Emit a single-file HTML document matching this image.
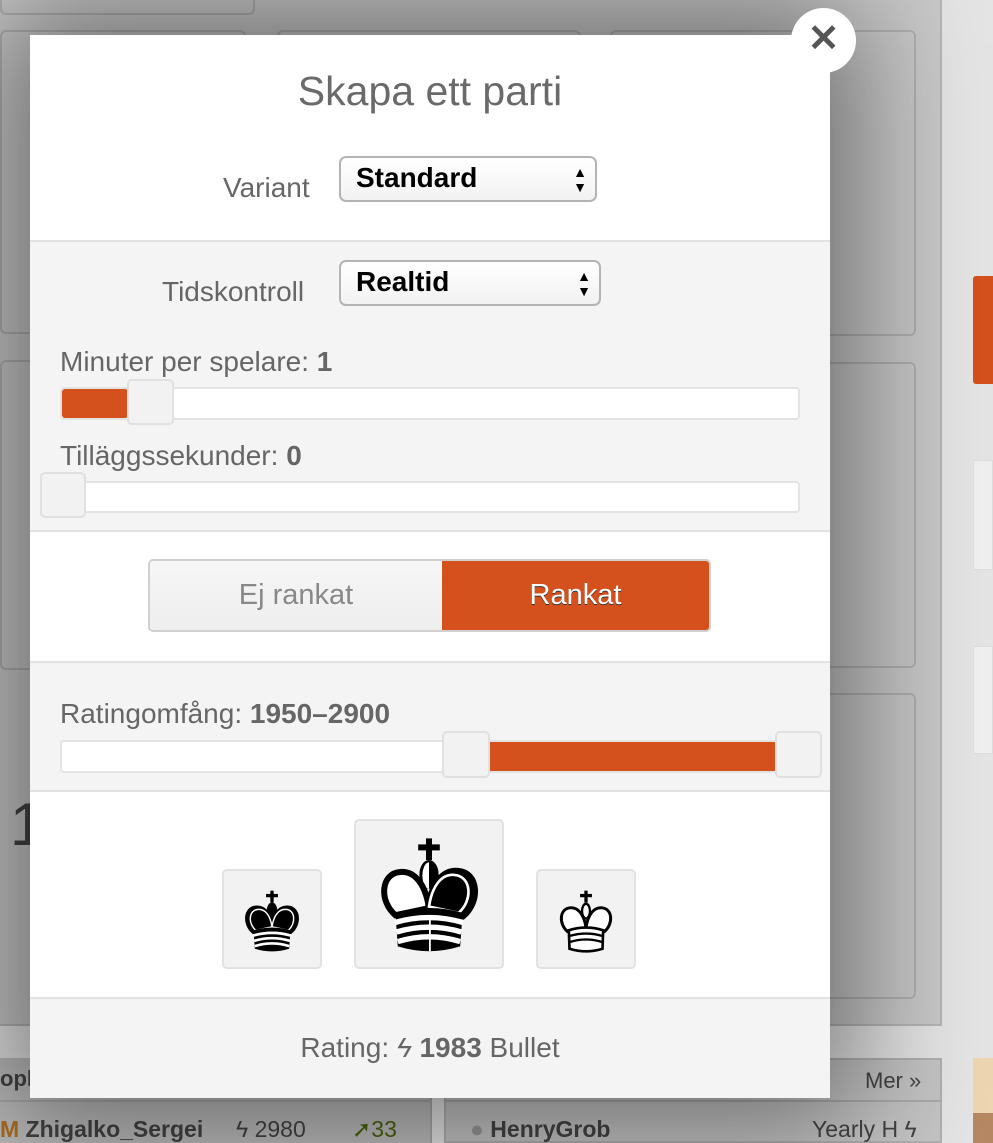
<!DOCTYPE html>
<html><head><meta charset="utf-8"><style>
*{box-sizing:border-box;margin:0;padding:0}
body{width:993px;height:1143px;overflow:hidden;background:#e4e4e4;font-family:"Liberation Sans",sans-serif;position:relative}
.abs{position:absolute}
.page{left:0;top:0;width:942px;height:1026px;background:#c9c9c9;border-right:2px solid #b5b5b5;border-bottom:2px solid #b5b5b5}
.panel{border:2px solid rgba(0,0,0,.12);border-radius:6px}
.modal{left:30px;top:35px;width:800px;height:1063px;background:#f4f4f4;box-shadow:0 0 110px 30px rgba(0,0,0,.45);color:#666}
.sec{position:absolute;left:0;width:800px}
.white{background:#fff}
.bt{border-top:2px solid #e2e2e2}
.sel{position:absolute;height:46px;border:2px solid #b4b4b4;border-radius:7px;background:linear-gradient(#fff,#f2f2f2);font-weight:bold;color:#000;font-size:28px;padding:4px 0 0 15px;white-space:nowrap}
.arr{position:absolute;right:8px;top:7px;font-size:14px;line-height:15px;color:#000}
.lbl{position:absolute;font-size:28px;color:#666;white-space:nowrap}
.track{position:absolute;background:#fff;border:2px solid #e3e3e3;border-radius:4px}
.fill{position:absolute;background:#d4501c;border-radius:3px}
.handle{position:absolute;background:#f2f2f2;border:2px solid #e0e0e0;border-radius:5px}
.kbox{position:absolute;background:#f2f2f2;border:2px solid #e2e2e2;border-radius:5px;display:flex;align-items:center;justify-content:center}
</style></head><body>
<div class="abs page"></div>
<div class="abs panel" style="left:0;top:-5px;width:255px;height:20px"></div>
<div class="abs panel" style="left:0;top:30px;width:246px;height:304px"></div>
<div class="abs panel" style="left:277px;top:30px;width:304px;height:304px"></div>
<div class="abs panel" style="left:610px;top:30px;width:306px;height:306px"></div>
<div class="abs panel" style="left:0;top:360px;width:246px;height:310px"></div>
<div class="abs panel" style="left:610px;top:362px;width:306px;height:306px"></div>
<div class="abs panel" style="left:610px;top:693px;width:306px;height:306px"></div>
<div class="abs" style="left:10px;top:790px;font-size:60px;color:#444">1</div>
<div class="abs" style="left:810px;top:822px;font-size:40px;color:#555">d</div>
<div class="abs" style="left:973px;top:276px;width:20px;height:108px;background:#d4501c;border-radius:3px 0 0 3px"></div>
<div class="abs" style="left:973px;top:460px;width:20px;height:110px;background:#efefef;border:1px solid #ddd"></div>
<div class="abs" style="left:973px;top:646px;width:20px;height:108px;background:#efefef;border:1px solid #ddd"></div>
<div class="abs" style="left:973px;top:1058px;width:20px;height:55px;background:#ecd5b0"></div>
<div class="abs" style="left:973px;top:1113px;width:20px;height:30px;background:#b58863"></div>
<div class="abs" style="left:0;top:1058px;width:432px;height:85px;background:#bdbdbd;border-right:2px solid #aaa"></div>
<div class="abs" style="left:444px;top:1058px;width:498px;height:85px;background:#c4c4c4;border:2px solid #b0b0b0"></div>
<div class="abs" style="left:0;top:1100px;width:432px;height:2px;background:#aaa"></div>
<div class="abs" style="left:444px;top:1100px;width:498px;height:2px;background:#aaa"></div>
<div class="abs" style="left:0;top:1066px;font-size:22px;color:#444;font-weight:bold">opli</div>
<div class="abs" style="left:865px;top:1068px;font-size:22px;color:#444">Mer »</div>
<div class="abs" style="left:0;top:1116px;font-size:23px;color:#444;font-weight:bold;white-space:nowrap"><span style="color:#b07020">M</span> Zhigalko_Sergei</div>
<div class="abs" style="left:236px;top:1116px;font-size:23px;color:#444;white-space:nowrap">ϟ 2980</div>
<div class="abs" style="left:352px;top:1116px;font-size:23px;color:#4a6410;white-space:nowrap">➚33</div>
<div class="abs" style="left:470px;top:1116px;font-size:23px;color:#444;font-weight:bold;white-space:nowrap"><span style="color:#999">●</span> HenryGrob</div>
<div class="abs" style="left:812px;top:1116px;font-size:23px;color:#444;white-space:nowrap">Yearly H ϟ</div>

<svg width="0" height="0" style="position:absolute">
 <defs>
  <path id="lobeL" d="M50 60 C47 40 38 29 26 30 C10 31 8 54 22 66 Z"/>
  <path id="lobeR" d="M50 60 C53 40 62 29 74 30 C90 31 92 54 78 66 Z"/>
 </defs>
</svg>

<div class="abs modal">
  <div class="sec white" style="top:0;height:205px"></div>
  <div class="sec white bt" style="top:495px;height:131px"></div>
  <div class="sec bt" style="top:205px;height:2px"></div>
  <div class="sec bt" style="top:626px;height:2px"></div>
  <div class="sec white bt" style="top:755px;height:208px"></div>
  <div class="sec bt" style="top:962px;height:2px"></div>

  <div class="lbl" style="left:0;width:800px;text-align:center;top:33px;font-size:41px;color:#6a6a6a">Skapa ett parti</div>
  <div class="lbl" style="left:193px;top:137px">Variant</div>
  <div class="sel" style="left:309px;top:121px;width:258px">Standard<div class="arr">▲<br>▼</div></div>
  <div class="lbl" style="left:132px;top:241px">Tidskontroll</div>
  <div class="sel" style="left:309px;top:225px;width:262px">Realtid<div class="arr">▲<br>▼</div></div>

  <div class="lbl" style="left:30px;top:311px">Minuter per spelare: <b>1</b></div>
  <div class="track" style="left:30px;top:352px;width:740px;height:33px"></div>
  <div class="fill" style="left:32px;top:354px;width:66px;height:29px"></div>
  <div class="handle" style="left:97px;top:344px;width:47px;height:46px"></div>

  <div class="lbl" style="left:30px;top:405px">Tilläggssekunder: <b>0</b></div>
  <div class="track" style="left:30px;top:446px;width:740px;height:32px"></div>
  <div class="handle" style="left:10px;top:437px;width:46px;height:46px"></div>

  <div class="abs" style="left:118px;top:524px;width:563px;height:73px;border:2px solid #d0d0d0;border-radius:5px;overflow:hidden;display:flex">
    <div style="width:292px;background:linear-gradient(#f6f6f6,#eee);color:#888;font-size:29px;text-align:center;line-height:69px">Ej rankat</div>
    <div style="flex:1;background:#d4501c;color:#fff;font-size:29px;text-align:center;line-height:69px;text-shadow:0 1px 0 #333">Rankat</div>
  </div>

  <div class="lbl" style="left:30px;top:663px">Ratingomfång: <b>1950–2900</b></div>
  <div class="track" style="left:30px;top:705px;width:760px;height:33px"></div>
  <div class="fill" style="left:458px;top:707px;width:288px;height:29px;border-radius:0"></div>
  <div class="handle" style="left:412px;top:696px;width:48px;height:47px"></div>
  <div class="handle" style="left:745px;top:696px;width:47px;height:47px"></div>

  <div class="kbox" style="left:192px;top:834px;width:100px;height:100px">
    <svg width="66" height="66" viewBox="0 0 100 100" style="margin-top:4px">
      <rect x="47.5" y="4" width="5" height="18" fill="#000"/><rect x="41" y="9" width="18" height="5" fill="#000"/>
      <ellipse cx="50" cy="34" rx="8" ry="12" fill="#000"/>
      <use href="#lobeL" fill="#000" stroke="#000" stroke-width="7"/>
      <use href="#lobeR" fill="#000" stroke="#000" stroke-width="7"/>
      <use href="#lobeL" fill="none" stroke="#fff" stroke-width="2.5" transform="translate(50 50) scale(.88) translate(-50 -50)"/>
      <use href="#lobeR" fill="none" stroke="#fff" stroke-width="2.5" transform="translate(50 50) scale(.88) translate(-50 -50)"/>
      <path d="M22 64 Q50 56 78 64 L76 92 Q50 100 24 92 Z" fill="#000"/>
      <path d="M22 72 Q50 64 78 72 M23 80 Q50 72 77 80 M24 88 Q50 80 76 88" stroke="#fff" stroke-width="4" fill="none"/>
    </svg>
  </div>
  <div class="kbox" style="left:324px;top:784px;width:150px;height:150px">
    <svg width="120" height="120" viewBox="0 0 100 100" style="margin-top:4px">
      <rect x="47.5" y="2" width="5" height="18" fill="#000"/><rect x="41" y="7" width="18" height="5" fill="#000"/>
      <ellipse cx="50" cy="32" rx="8" ry="12" fill="#000"/>
      <path d="M50 22 A5 10 0 0 0 50 44 Z" fill="#fff"/>
      <use href="#lobeL" fill="#fff" stroke="#000" stroke-width="5"/>
      <use href="#lobeR" fill="#000" stroke="#000" stroke-width="7"/>
      <use href="#lobeR" fill="none" stroke="#fff" stroke-width="2.5" transform="translate(50 50) scale(.88) translate(-50 -50)"/>
      <path d="M22 64 Q50 56 78 64 L76 92 Q50 100 24 92 Z" fill="#000"/>
      <path d="M22 72 Q50 64 78 72 M23 80 Q50 72 77 80 M24 88 Q50 80 76 88" stroke="#fff" stroke-width="4.5" fill="none"/>
      <rect x="50" y="66" width="1.5" height="30" fill="#fff"/>
    </svg>
  </div>
  <div class="kbox" style="left:506px;top:834px;width:100px;height:100px">
    <svg width="66" height="66" viewBox="0 0 100 100" style="margin-top:4px">
      <rect x="47.5" y="4" width="5" height="18" fill="#000"/><rect x="41" y="9" width="18" height="5" fill="#000"/>
      <ellipse cx="50" cy="35" rx="6" ry="11" fill="#fff" stroke="#000" stroke-width="3.5"/>
      <use href="#lobeL" fill="#fff" stroke="#000" stroke-width="4.5"/>
      <use href="#lobeR" fill="#fff" stroke="#000" stroke-width="4.5"/>
      <path d="M24 64 Q50 56 76 64 L75 92 Q50 100 25 92 Z" fill="#fff" stroke="#000" stroke-width="4"/>
      <path d="M24 73 Q50 65 76 73 M25 82 Q50 74 75 82" stroke="#000" stroke-width="3.5" fill="none"/>
    </svg>
  </div>

  <div class="lbl" style="left:0;width:800px;text-align:center;top:997px">Rating: <span style="font-style:italic">ϟ</span> <b>1983</b> Bullet</div>
</div>
<div class="abs" style="left:791px;top:8px;width:65px;height:65px;border-radius:50%;background:#fff;text-align:center;line-height:62px;font-size:38px;font-weight:bold;color:#555">✕</div>
</body></html>
